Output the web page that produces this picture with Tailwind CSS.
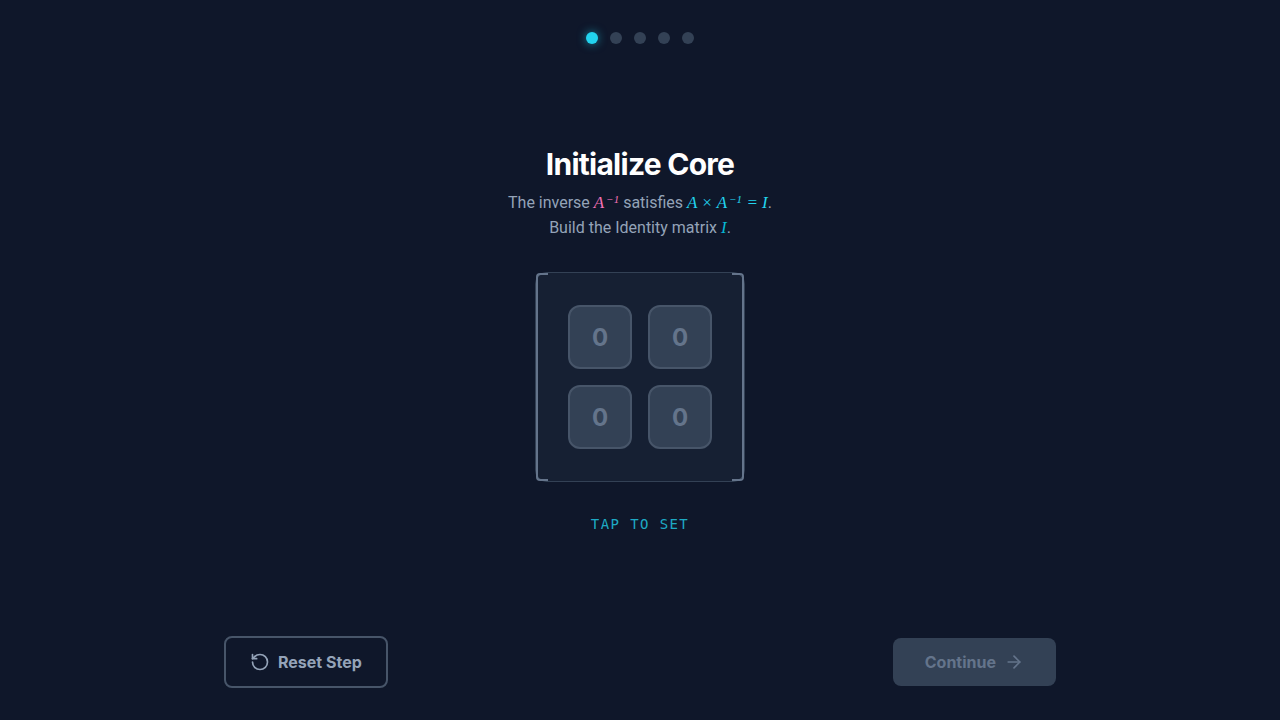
<!DOCTYPE html>
<html lang="en">
<head>
    <meta charset="UTF-8">
    <meta name="viewport" content="width=device-width, initial-scale=1.0">
    <title>Initialize Core</title>
    <script src="https://cdn.jsdelivr.net/npm/@tailwindcss/browser@4"></script>
</head>
<body class="min-h-screen flex flex-col items-center bg-[#0f172a] font-['Inter',sans-serif] text-white">
    <!-- Step indicator -->
    <header class="flex justify-center gap-3 pt-8">
        <span class="size-3 rounded-full bg-[#22d3ee] shadow-[0_0_10px_rgba(34,211,238,0.6)]"></span>
        <span class="size-3 rounded-full bg-[#334155]"></span>
        <span class="size-3 rounded-full bg-[#334155]"></span>
        <span class="size-3 rounded-full bg-[#334155]"></span>
        <span class="size-3 rounded-full bg-[#334155]"></span>
    </header>

    <main class="flex-1 w-full flex flex-col items-center justify-center gap-8">
        <div class="text-center">
            <h1 class="text-3xl font-bold tracking-tight mb-2">Initialize Core</h1>
            <p class="font-[Roboto,sans-serif] text-base leading-[25px] text-[#94a3b8]">
                The inverse <span class="font-['Liberation_Serif',serif] text-[17px] italic text-[#f472b6]">A<sup class="ml-0.5 text-[11px]">−1</sup></span> satisfies <span class="font-['Liberation_Serif',serif] text-[17px] italic text-[#22d3ee]">A × A<sup class="ml-0.5 text-[11px]">−1</sup> = I</span>.<br>
                Build the Identity matrix <span class="font-['Liberation_Serif',serif] text-[17px] italic text-[#06b6d4]">I</span>.
            </p>
        </div>

        <!-- Matrix -->
        <div class="relative rounded-xl border border-[#334155] bg-[#1e293b]/50 p-8">
            <div class="absolute inset-y-0 left-0 w-3 rounded-l-sm border-2 border-r-0 border-[#64748b]"></div>
            <div class="absolute inset-y-0 right-0 w-3 rounded-r-sm border-2 border-l-0 border-[#64748b]"></div>
            <div class="grid grid-cols-2 gap-4">
                <button class="size-16 rounded-xl border-2 border-[#475569] bg-[#334155] pt-0.5 text-2xl font-bold text-[#64748b]">0</button>
                <button class="size-16 rounded-xl border-2 border-[#475569] bg-[#334155] pt-0.5 text-2xl font-bold text-[#64748b]">0</button>
                <button class="size-16 rounded-xl border-2 border-[#475569] bg-[#334155] pt-0.5 text-2xl font-bold text-[#64748b]">0</button>
                <button class="size-16 rounded-xl border-2 border-[#475569] bg-[#334155] pt-0.5 text-2xl font-bold text-[#64748b]">0</button>
            </div>
        </div>

        <p class="font-['DejaVu_Sans_Mono',monospace] text-sm tracking-widest text-[#22d3ee]/80">TAP TO SET</p>
    </main>

    <footer class="w-full max-w-4xl flex items-center justify-between px-8 pb-8">
        <button class="flex items-center gap-2 rounded-lg border-2 border-[#475569] px-6 py-3 font-bold text-[#94a3b8]">
            <svg class="size-5" viewBox="0 0 24 24" fill="none" stroke="currentColor" stroke-width="2" stroke-linecap="round" stroke-linejoin="round">
                <path d="M3 12a9 9 0 1 0 9-9 9.75 9.75 0 0 0-6.74 2.74L3 8"/>
                <path d="M3 3v5h5"/>
            </svg>
            Reset Step
        </button>
        <button class="flex items-center gap-2 rounded-lg bg-[#334155] px-8 py-3 font-bold text-[#64748b]" disabled>
            Continue
            <svg class="size-5" viewBox="0 0 24 24" fill="none" stroke="currentColor" stroke-width="2" stroke-linecap="round" stroke-linejoin="round">
                <path d="M5 12h14"/>
                <path d="m12 5 7 7-7 7"/>
            </svg>
        </button>
    </footer>
</body>
</html>
